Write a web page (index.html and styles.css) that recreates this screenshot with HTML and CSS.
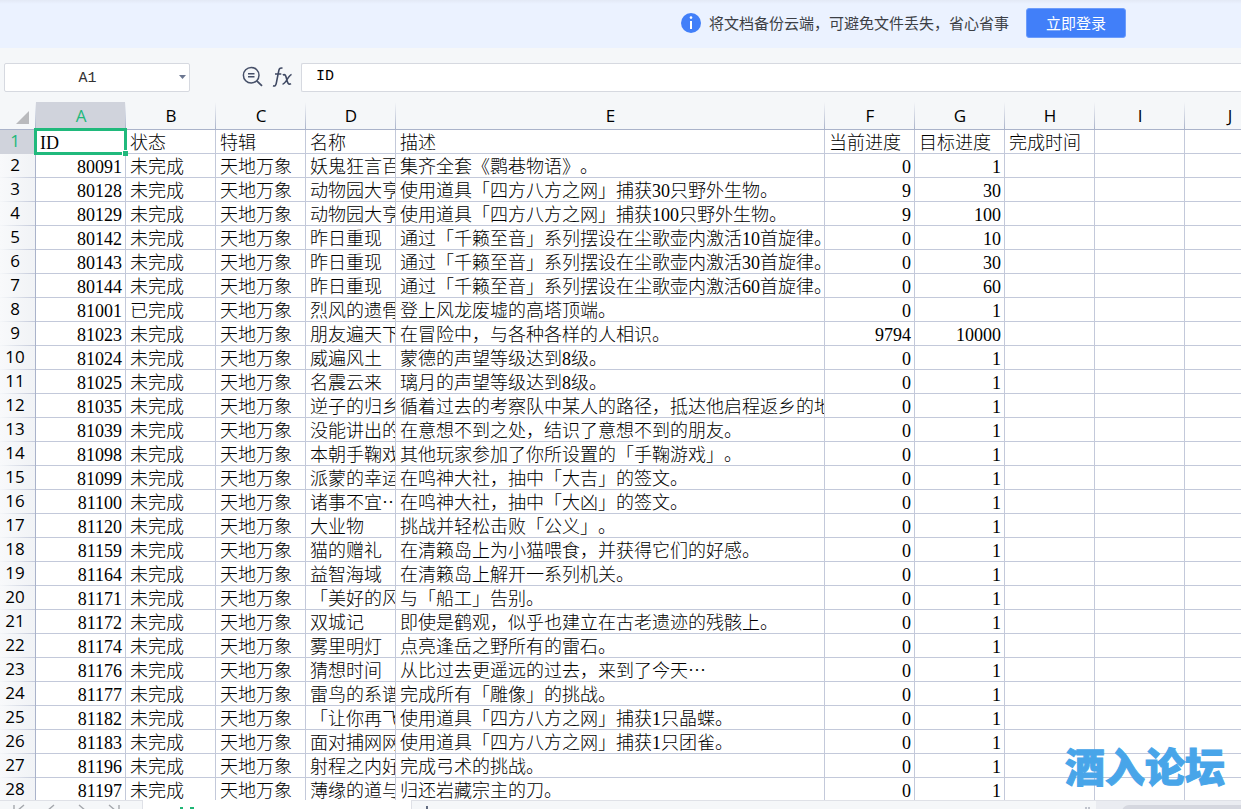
FILE: index.html
```html
<!DOCTYPE html>
<html lang="zh-CN">
<head>
<meta charset="utf-8">
<title>表格</title>
<link rel="stylesheet" href="styles.css">
</head>
<body>
<div class="app">
<header class="banner">
<svg class="info" viewBox="0 0 20 20" aria-hidden="true"><circle cx="10" cy="10" r="10" fill="#417ff9"/><rect x="9" y="8" width="2" height="8" fill="#fff"/><circle cx="10" cy="4.6" r="1.3" fill="#fff"/></svg>
<p class="notice">将文档备份云端，可避免文件丢失，省心省事</p>
<button class="login" type="button">立即登录</button>
</header>
<div class="formula-bar">
<div class="name-box">
<input class="name-input" type="text" value="A1" aria-label="名称框">
<button class="name-drop" type="button" aria-label="展开名称列表"><svg class="caret" viewBox="0 0 7 4"><path d="M0 0H7L3.5 4Z" fill="#6b7690"/></svg></button>
</div>
<div class="tools">
<button class="tool" type="button" aria-label="浏览公式结果"><svg class="tool-icon" viewBox="0 0 22 22" fill="none" stroke="#454f68" stroke-width="1.5"><circle cx="9.2" cy="9.2" r="7.8"/><path d="M6 7.7H12.5M6 10.7H12.5"/><path d="M14.8 14.8L20 19.8" stroke-width="1.8"/></svg></button>
<button class="tool" type="button" aria-label="插入函数"><svg class="tool-icon" viewBox="0 0 22 22" fill="none" stroke="#3f4963" stroke-width="1.6"><path d="M10.5 2.3C8.2 1.4 7.2 2.7 6.8 4.7L4.3 17.2C3.9 19.4 2.9 20.4 1 19.8M3 8H9.3"/><path d="M10.8 9C13 7.7 13.8 9.5 14.5 12.5C15.3 16.5 16.4 19.4 19 17.6M19.6 8.5C16.5 9 13.5 18.4 10.5 18"/></svg></button>
</div>
<input class="formula-input" type="text" value="ID" aria-label="编辑栏">
</div>
<main class="sheet">
<table class="grid">
<colgroup><col class="c-num"><col class="c"><col class="c"><col class="c"><col class="c"><col class="c-wide"><col class="c"><col class="c"><col class="c"><col class="c"><col class="c"></colgroup>
<thead><tr><th class="corner" aria-label="全选"><svg class="corner-icon" viewBox="0 0 13 13"><path d="M13 0V13H0Z" fill="#b9babd"/></svg></th><th class="active">A</th><th>B</th><th>C</th><th>D</th><th>E</th><th>F</th><th>G</th><th>H</th><th>I</th><th>J</th></tr></thead>
<tbody>
<tr><th class="active">1</th><td class="selected">ID<span class="handle"></span></td><td>状态</td><td>特辑</td><td>名称</td><td>描述</td><td>当前进度</td><td>目标进度</td><td>完成时间</td><td></td><td></td></tr>
<tr><th>2</th><td class="n">80091</td><td>未完成</td><td>天地万象</td><td>妖鬼狂言百</td><td>集齐全套《鹮巷物语》。</td><td class="n">0</td><td class="n">1</td><td></td><td></td><td></td></tr>
<tr><th>3</th><td class="n">80128</td><td>未完成</td><td>天地万象</td><td>动物园大亨</td><td>使用道具「四方八方之网」捕获30只野外生物。</td><td class="n">9</td><td class="n">30</td><td></td><td></td><td></td></tr>
<tr><th>4</th><td class="n">80129</td><td>未完成</td><td>天地万象</td><td>动物园大亨</td><td>使用道具「四方八方之网」捕获100只野外生物。</td><td class="n">9</td><td class="n">100</td><td></td><td></td><td></td></tr>
<tr><th>5</th><td class="n">80142</td><td>未完成</td><td>天地万象</td><td>昨日重现</td><td>通过「千籁至音」系列摆设在尘歌壶内激活10首旋律。</td><td class="n">0</td><td class="n">10</td><td></td><td></td><td></td></tr>
<tr><th>6</th><td class="n">80143</td><td>未完成</td><td>天地万象</td><td>昨日重现</td><td>通过「千籁至音」系列摆设在尘歌壶内激活30首旋律。</td><td class="n">0</td><td class="n">30</td><td></td><td></td><td></td></tr>
<tr><th>7</th><td class="n">80144</td><td>未完成</td><td>天地万象</td><td>昨日重现</td><td>通过「千籁至音」系列摆设在尘歌壶内激活60首旋律。</td><td class="n">0</td><td class="n">60</td><td></td><td></td><td></td></tr>
<tr><th>8</th><td class="n">81001</td><td>已完成</td><td>天地万象</td><td>烈风的遗骨</td><td>登上风龙废墟的高塔顶端。</td><td class="n">0</td><td class="n">1</td><td></td><td></td><td></td></tr>
<tr><th>9</th><td class="n">81023</td><td>未完成</td><td>天地万象</td><td>朋友遍天下</td><td>在冒险中，与各种各样的人相识。</td><td class="n">9794</td><td class="n">10000</td><td></td><td></td><td></td></tr>
<tr><th>10</th><td class="n">81024</td><td>未完成</td><td>天地万象</td><td>威遍风土</td><td>蒙德的声望等级达到8级。</td><td class="n">0</td><td class="n">1</td><td></td><td></td><td></td></tr>
<tr><th>11</th><td class="n">81025</td><td>未完成</td><td>天地万象</td><td>名震云来</td><td>璃月的声望等级达到8级。</td><td class="n">0</td><td class="n">1</td><td></td><td></td><td></td></tr>
<tr><th>12</th><td class="n">81035</td><td>未完成</td><td>天地万象</td><td>逆子的归乡</td><td>循着过去的考察队中某人的路径，抵达他启程返乡的地</td><td class="n">0</td><td class="n">1</td><td></td><td></td><td></td></tr>
<tr><th>13</th><td class="n">81039</td><td>未完成</td><td>天地万象</td><td>没能讲出的</td><td>在意想不到之处，结识了意想不到的朋友。</td><td class="n">0</td><td class="n">1</td><td></td><td></td><td></td></tr>
<tr><th>14</th><td class="n">81098</td><td>未完成</td><td>天地万象</td><td>本朝手鞠戏</td><td>其他玩家参加了你所设置的「手鞠游戏」。</td><td class="n">0</td><td class="n">1</td><td></td><td></td><td></td></tr>
<tr><th>15</th><td class="n">81099</td><td>未完成</td><td>天地万象</td><td>派蒙的幸运</td><td>在鸣神大社，抽中「大吉」的签文。</td><td class="n">0</td><td class="n">1</td><td></td><td></td><td></td></tr>
<tr><th>16</th><td class="n">81100</td><td>未完成</td><td>天地万象</td><td>诸事不宜<span class="dots">…</span></td><td>在鸣神大社，抽中「大凶」的签文。</td><td class="n">0</td><td class="n">1</td><td></td><td></td><td></td></tr>
<tr><th>17</th><td class="n">81120</td><td>未完成</td><td>天地万象</td><td>大业物</td><td>挑战并轻松击败「公义」。</td><td class="n">0</td><td class="n">1</td><td></td><td></td><td></td></tr>
<tr><th>18</th><td class="n">81159</td><td>未完成</td><td>天地万象</td><td>猫的赠礼</td><td>在清籁岛上为小猫喂食，并获得它们的好感。</td><td class="n">0</td><td class="n">1</td><td></td><td></td><td></td></tr>
<tr><th>19</th><td class="n">81164</td><td>未完成</td><td>天地万象</td><td>益智海域</td><td>在清籁岛上解开一系列机关。</td><td class="n">0</td><td class="n">1</td><td></td><td></td><td></td></tr>
<tr><th>20</th><td class="n">81171</td><td>未完成</td><td>天地万象</td><td>「美好的风</td><td>与「船工」告别。</td><td class="n">0</td><td class="n">1</td><td></td><td></td><td></td></tr>
<tr><th>21</th><td class="n">81172</td><td>未完成</td><td>天地万象</td><td>双城记</td><td>即使是鹤观，似乎也建立在古老遗迹的残骸上。</td><td class="n">0</td><td class="n">1</td><td></td><td></td><td></td></tr>
<tr><th>22</th><td class="n">81174</td><td>未完成</td><td>天地万象</td><td>雾里明灯</td><td>点亮逢岳之野所有的雷石。</td><td class="n">0</td><td class="n">1</td><td></td><td></td><td></td></tr>
<tr><th>23</th><td class="n">81176</td><td>未完成</td><td>天地万象</td><td>猜想时间</td><td>从比过去更遥远的过去，来到了今天<span class="dots">…</span></td><td class="n">0</td><td class="n">1</td><td></td><td></td><td></td></tr>
<tr><th>24</th><td class="n">81177</td><td>未完成</td><td>天地万象</td><td>雷鸟的系谱</td><td>完成所有「雕像」的挑战。</td><td class="n">0</td><td class="n">1</td><td></td><td></td><td></td></tr>
<tr><th>25</th><td class="n">81182</td><td>未完成</td><td>天地万象</td><td>「让你再飞</td><td>使用道具「四方八方之网」捕获1只晶蝶。</td><td class="n">0</td><td class="n">1</td><td></td><td></td><td></td></tr>
<tr><th>26</th><td class="n">81183</td><td>未完成</td><td>天地万象</td><td>面对捕网网</td><td>使用道具「四方八方之网」捕获1只团雀。</td><td class="n">0</td><td class="n">1</td><td></td><td></td><td></td></tr>
<tr><th>27</th><td class="n">81196</td><td>未完成</td><td>天地万象</td><td>射程之内好</td><td>完成弓术的挑战。</td><td class="n">0</td><td class="n">1</td><td></td><td></td><td></td></tr>
<tr><th>28</th><td class="n">81197</td><td>未完成</td><td>天地万象</td><td>薄缘的道与</td><td>归还岩藏宗主的刀。</td><td class="n">0</td><td class="n">1</td><td></td><td></td><td></td></tr>
</tbody>
</table>
<div class="watermark">酒入论坛</div>
</main>
<footer class="tabs">
<div class="tab-nav"><svg class="nav-icons" viewBox="0 0 142 16" fill="none" stroke="#a5a8ad" stroke-width="1.4"><path d="M14 4V16M24 4L17 10L24 16M54 4L47 10L54 16M79 4L86 10L79 16M109 4L116 10L109 16M119 4V16"/></svg></div>
<div class="tab-current"><svg class="tab-mark" viewBox="0 0 16 4"><path d="M1 1H4M11 1H15" stroke="#1fb574" stroke-width="2"/></svg></div>
<div class="tab-rest"><svg class="plus" viewBox="0 0 14 14"><path d="M7 0V14M0 7H14" stroke="#3f4963" stroke-width="1.6"/></svg></div>
<div class="split"><svg class="split-icon" viewBox="0 0 6 8"><path d="M1 0V8M4 0V8" stroke="#8a90a0"/></svg></div>
<div class="scroll"><div class="thumb"></div></div>
</footer>
</div>
</body>
</html>
```
FILE: styles.css
```css
* { box-sizing: border-box; }
body { margin: 0; background: #f5f7f9; color: #000; font-family: "Noto Sans CJK SC", sans-serif; }
button, input { font: inherit; margin: 0; }
svg { display: block; }
.app { display: flex; flex-direction: column; height: 100vh; overflow: hidden; }
.banner { flex: none; display: flex; align-items: center; justify-content: flex-end; height: 48px; padding: 0 115px 2px 16px; background: linear-gradient(#e3e9f5, #ebf2ff 4px); }
.info { width: 20px; height: 20px; margin-right: 8px; }
.notice { margin: 0 17px 0 0; font-size: 15px; line-height: 22px; color: #3c3f45; white-space: nowrap; }
.login { width: 100px; height: 30px; padding: 0; border: 1px solid #6c9cfb; border-radius: 3px; background: #417ff9; color: #fff; font-size: 15px; line-height: 22px; }
.formula-bar { flex: none; display: flex; align-items: center; height: 54px; padding: 4px 0 0 4px; }
.name-box { display: flex; align-items: center; width: 186px; height: 29px; border: 1px solid #d6d9e0; border-radius: 2px; background: #fff; }
.name-input { flex: 1; min-width: 0; height: 100%; padding: 2px 6px 0 0; border: 0; background: none; text-align: center; font-family: "Liberation Mono", monospace; font-size: 15px; color: #333; }
.name-drop { padding: 4px 3px; border: 0; background: none; }
.caret { width: 7px; height: 4px; }
.tools { display: flex; gap: 8px; padding: 0 7px 0 52px; }
.tool { padding: 0; border: 0; background: none; }
.tool-icon { width: 22px; height: 22px; }
.formula-input { flex: 1; min-width: 0; height: 29px; padding: 0 14px 2px; border: 1px solid #d6d9e0; border-right: 0; border-radius: 2px 0 0 2px; background: #fff; font-family: "Liberation Mono", monospace; font-size: 15px; color: #000; }
.sheet { position: relative; flex: 1; min-height: 0; overflow: hidden; background: #fff; }
.grid { table-layout: fixed; width: 1275px; border-collapse: separate; border-spacing: 0; }
.c-num { width: 36px; }
.c { width: 90px; }
.c-wide { width: 429px; }
th { font-family: "Open Sans", sans-serif; font-weight: 400; font-size: 17px; }
thead th { height: 28px; padding: 0; line-height: 27px; border-bottom: 1px solid #aab3ca; background: linear-gradient(#f5f7f9, #aab3ca) right / 1px 100% no-repeat #f5f7f9; }
thead .active { background-color: #d0d3dc; color: #1fb87a; border-bottom-color: #1fb87a; }
.corner-icon { width: 13px; height: 13px; margin: 4px 0 0 16px; }
tbody th { height: 24px; padding: 0 5px 2px 0; line-height: 22px; border-right: 1px solid #aab3ca; background: linear-gradient(to right, #f5f7f9, #c3c9da) bottom / 100% 1px no-repeat, linear-gradient(to right, #f8f9fb, #f1f3f6); }
tbody .active { background: #d0d3dc; color: #1fb87a; }
td { height: 24px; padding: 3px 3px 0 4px; border-right: 1px solid #c3c9da; border-bottom: 1px solid #c3c9da; font-family: "Liberation Serif", "Noto Sans CJK SC", serif; font-size: 18px; font-weight: 300; line-height: 20px; text-spacing-trim: space-all; white-space: nowrap; overflow: hidden; }
.n { text-align: right; }
.dots { font-family: "Noto Sans CJK SC", sans-serif; line-height: 0; }
.selected { position: relative; overflow: visible; }
.selected::after { content: ""; position: absolute; inset: -2px; border: 3px solid #20b97c; }
.handle { position: absolute; z-index: 1; right: -3px; bottom: -3px; width: 6px; height: 6px; border: solid #fff; border-width: 1px 0 0 1px; background: #20b97c; }
.watermark { position: absolute; right: 16px; bottom: 13px; font-size: 40px; font-weight: 900; font-style: oblique 10deg; line-height: 44px; color: #48a5e9; -webkit-text-stroke: 1px #48a5e9; white-space: nowrap; }
.tabs { flex: none; display: flex; height: 9px; overflow: hidden; background: #fff; }
.tab-nav { flex: none; width: 143px; border: solid #dfe1e7; border-width: 1px 1px 0 0; background: #f5f7f9; }
.nav-icons { width: 142px; height: 16px; }
.tab-current { flex: none; width: 268px; padding: 7px 0 0 36px; }
.tab-mark { width: 16px; height: 4px; }
.tab-rest { flex: 1; padding: 5px 0 0 8px; border: solid #dfe1e7; border-width: 1px 0 0 1px; background: #f5f7f9; }
.plus { width: 14px; height: 14px; }
.split { flex: none; width: 16px; padding: 6px 0 0 5px; border-top: 1px solid #dfe1e7; background: #f5f7f9; }
.split-icon { width: 6px; height: 8px; }
.scroll { flex: none; width: 145px; padding: 4px 0 0 26px; border-top: 1px solid #dfe1e7; background: #eaecf1; }
.thumb { height: 14px; border-radius: 7px 0 0 7px; background: #d5d7df; }
```
